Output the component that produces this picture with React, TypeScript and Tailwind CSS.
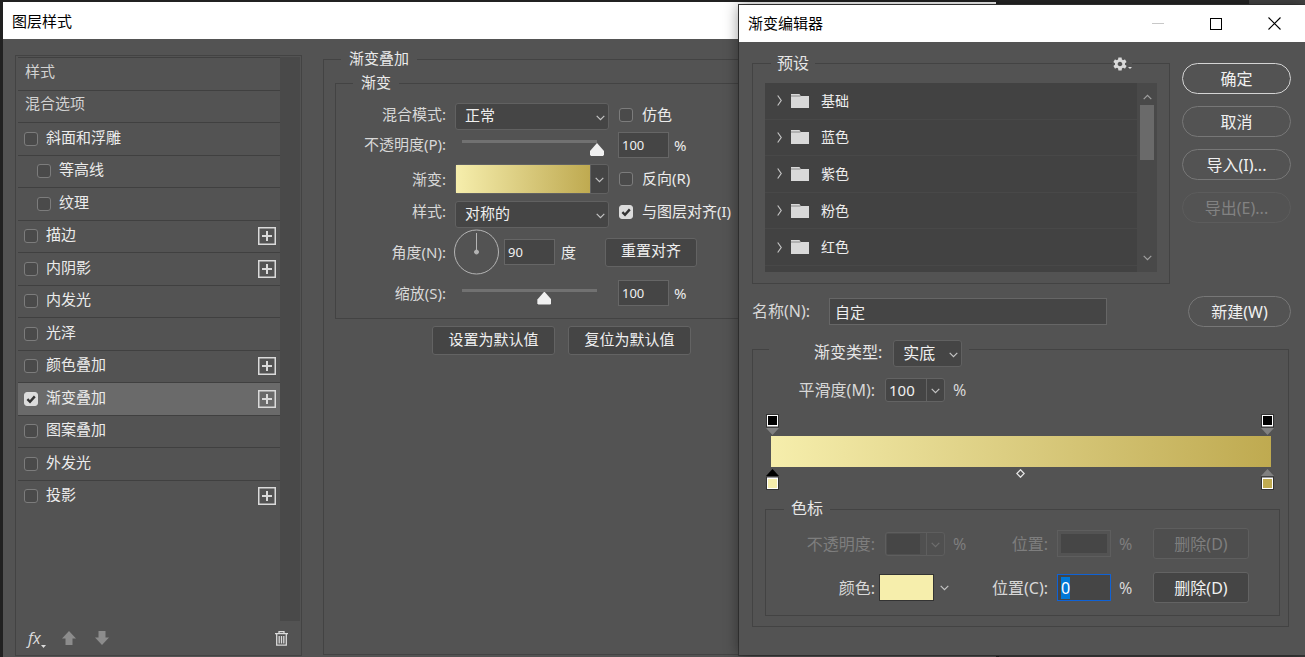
import React from 'react'
import clsx from 'clsx'
import { IoMdSettings } from 'react-icons/io'

interface Effect {
  name: string
  indent?: boolean
  checked?: boolean
  addable?: boolean
}

const effects: Effect[] = [
  { name: '斜面和浮雕' },
  { name: '等高线', indent: true },
  { name: '纹理', indent: true },
  { name: '描边', addable: true },
  { name: '内阴影', addable: true },
  { name: '内发光' },
  { name: '光泽' },
  { name: '颜色叠加', addable: true },
  { name: '渐变叠加', checked: true, addable: true },
  { name: '图案叠加' },
  { name: '外发光' },
  { name: '投影', addable: true },
]

const presets = ['基础', '蓝色', '紫色', '粉色', '红色']

function Chevron({ className }: { className?: string }) {
  return (
    <svg width="9" height="6" viewBox="0 0 9 6" className={className} fill="none" stroke="currentColor">
      <path d="M0.7 0.8 4.5 4.6 8.3 0.8" strokeWidth="1.2" />
    </svg>
  )
}

function Checkbox({ id, checked, label }: { id?: string; checked?: boolean; label?: string }) {
  return (
    <span className="relative flex size-[14px] shrink-0">
      <input
        id={id}
        type="checkbox"
        aria-label={label}
        defaultChecked={checked}
        className="peer size-[14px] appearance-none rounded-[3px] border border-[#7c7c7c] bg-[#4a4a4a] checked:border-[#dcdcdc] checked:bg-[#dcdcdc]"
      />
      <svg
        viewBox="0 0 14 14"
        className="pointer-events-none absolute inset-0 hidden peer-checked:block"
        fill="none"
        stroke="#333"
        strokeWidth="2.4"
      >
        <path d="M3.4 7.2 6 9.8 10.8 4.4" />
      </svg>
    </span>
  )
}

function CheckLabel({ id, checked, text }: { id: string; checked?: boolean; text: string }) {
  return (
    <div className="flex items-center gap-[9px] pl-px whitespace-nowrap">
      <Checkbox id={id} checked={checked} />
      <label htmlFor={id} className="pb-0.5">{text}</label>
    </div>
  )
}

function Select({ id, value, className }: { id: string; value: string; className?: string }) {
  return (
    <div className={clsx('relative', className)}>
      <select
        id={id}
        className="block h-[27px] w-full appearance-none rounded-[3px] border border-[#616161] bg-[#454545] pb-[3px] pl-[9px] text-[#f0f0f0]"
      >
        <option>{value}</option>
      </select>
      <Chevron className="pointer-events-none absolute top-3 right-1 text-[#c4c4c4]" />
    </div>
  )
}

function Slider({ id, value }: { id: string; value: number }) {
  return (
    <input
      id={id}
      type="range"
      defaultValue={value}
      className="mt-[7px] block h-4 w-[149px] appearance-none bg-[linear-gradient(#717171,#717171)] bg-[length:135px_3px] bg-[position:7px_0px] bg-no-repeat [&::-webkit-slider-thumb]:mt-[3px] [&::-webkit-slider-thumb]:h-[13px] [&::-webkit-slider-thumb]:w-[14px] [&::-webkit-slider-thumb]:appearance-none [&::-webkit-slider-thumb]:bg-[#f0f0f0] [&::-webkit-slider-thumb]:[clip-path:polygon(50%_0,100%_62%,100%_90%,93%_100%,7%_100%,0_90%,0_62%)]"
    />
  )
}

function NumberBox({ id, value, label }: { id?: string; value: string; label?: string }) {
  return (
    <input
      id={id}
      aria-label={label}
      defaultValue={value}
      className="h-[26px] w-[51px] border border-[#666] bg-[#454545] pl-[3px] text-[13px] text-[#f0f0f0]"
    />
  )
}

function Combo({ id, value, disabled }: { id: string; value?: string; disabled?: boolean }) {
  return (
    <div
      className={clsx(
        'flex h-6 w-[60px] rounded-[3px] border',
        disabled ? 'border-[#5e5e5e] bg-[#505050] text-[#6e6e6e]' : 'border-[#636363] bg-[#454545] text-[#c4c4c4]'
      )}
    >
      <input
        id={id}
        defaultValue={value}
        disabled={disabled}
        className={clsx('text-[15px]', disabled ? 'm-px w-[33px] bg-[#464646]' : 'w-10 pl-[3px] text-[#f0f0f0]')}
      />
      <button
        aria-label="展开"
        disabled={disabled}
        className="ml-auto flex w-[18px] items-center justify-center border-l border-[#636363] pt-0.5 disabled:border-[#5e5e5e]"
      >
        <Chevron />
      </button>
    </div>
  )
}

function EffectRow({ name, indent, checked, addable }: Effect) {
  const id = `effect-${name}`
  return (
    <li
      className={clsx(
        'flex items-center border-t border-[#404040] pr-1',
        indent ? 'pl-[19px]' : 'pl-[6px]',
        checked && 'bg-[#6a6a6a]'
      )}
    >
      <Checkbox id={id} checked={checked} />
      <label htmlFor={id} className="flex-1 pb-1 pl-2">
        {name}
      </label>
      {addable && (
        <button aria-label={`添加${name}`} className="text-[#dadada]">
          <svg width="18" height="18" viewBox="0 0 18 18" fill="none" stroke="currentColor">
            <rect x="0.75" y="0.75" width="16.5" height="16.5" strokeWidth="1.5" />
            <path d="M9 4v10M4 9h10" strokeWidth="2" />
          </svg>
        </button>
      )}
    </li>
  )
}

function EffectPanel() {
  return (
    <div className="mt-4 mb-px ml-3 flex w-[287px] flex-col border border-[#434343] pt-px">
      <div className="flex flex-1 pr-px pl-0.5">
        <ul className="grid h-[455px] flex-1 auto-rows-fr">
          <li className="flex items-center border-t border-[#404040] pb-1.5 pl-[7px] text-[#d2d2d2]">样式</li>
          <li className="flex items-center border-t border-[#404040] pb-1.5 pl-[7px] text-[#d2d2d2]">混合选项</li>
          {effects.map((effect) => (
            <EffectRow key={effect.name} {...effect} />
          ))}
        </ul>
        <div className="w-5 bg-[#494949]" />
      </div>
      <div className="flex h-[34px] items-center pr-[13px] pl-3">
        <button aria-label="效果菜单" className="flex w-5 items-end text-[#dcdcdc]">
          <span className="font-['Open_Sans'] text-base leading-5 italic">fx</span>
          <svg width="5" height="3" viewBox="0 0 5 3" fill="currentColor" className="shrink-0">
            <path d="M0 0h5L2.5 3z" />
          </svg>
        </button>
        <button aria-label="上移" className="ml-[14px] text-[#8c8c8c]">
          <svg width="14" height="14" viewBox="0 0 14 14" fill="currentColor">
            <path d="M7 0 14 7.5h-3.5V14h-7V7.5H0z" />
          </svg>
        </button>
        <button aria-label="下移" className="ml-[19px] text-[#8c8c8c]">
          <svg width="14" height="14" viewBox="0 0 14 14" fill="currentColor">
            <path d="M3.5 0h7v6.5H14L7 14 0 6.5h3.5z" />
          </svg>
        </button>
        <button aria-label="删除" className="ml-auto text-[#dadada]">
          <svg width="13" height="15" viewBox="0 0 13 15" fill="none" stroke="currentColor">
            <path d="M0 2.6h13M4 2.5V.7h5v1.8M1.7 3v11.2h9.6V3" strokeWidth="1.3" />
            <path d="M4.2 5v7.5M6.5 5v7.5M8.8 5v7.5" strokeWidth="1.3" />
          </svg>
        </button>
      </div>
    </div>
  )
}

const optionRow = 'grid grid-cols-[110px_154px_auto] items-center gap-x-[9px]'
const optionLabel = 'text-right whitespace-nowrap text-[#d8d8d8]'
const flatButton = 'rounded-[3px] border border-[#636363] bg-[#454545] pb-1 text-[#f0f0f0]'

function OverlayPanel() {
  return (
    <fieldset className="mt-[10px] mr-32 mb-0.5 ml-[21px] min-w-0 flex-1 border border-[#434343]">
      <legend className="ml-[17px] h-5 px-2 leading-[18px]">渐变叠加</legend>
      <fieldset className="mt-1 mr-3 ml-[11px] border border-[#434343] pt-[10px] pb-[7px]">
        <legend className="ml-[17px] h-5 px-2 leading-[18px]">渐变</legend>
        <div className={optionRow}>
          <label htmlFor="blend" className={clsx(optionLabel, 'pb-1.5')}>混合模式:</label>
          <Select id="blend" value="正常" />
          <div className="pb-1">
            <CheckLabel id="dither" text="仿色" />
          </div>
        </div>
        <div className={clsx(optionRow, 'h-[29px]')}>
          <label htmlFor="opacity" className={clsx(optionLabel, 'pb-0.5')}>不透明度(P):</label>
          <Slider id="opacity" value={100} />
          <div className="flex items-center gap-[5px]">
            <NumberBox value="100" label="不透明度" />%
          </div>
        </div>
        <div className={clsx(optionRow, 'h-10')}>
          <label htmlFor="fill" className={optionLabel}>渐变:</label>
          <div className="flex h-[30px] rounded-[3px] border border-[#626262] bg-[#454545]">
            <button id="fill" aria-label="渐变" className="flex-1 bg-linear-to-r from-[#f6eeac] to-[#bfaa50]" />
            <button aria-label="渐变列表" className="flex w-[18px] items-center justify-center border-l border-[#626262] pt-0.5 text-[#c4c4c4]">
              <Chevron />
            </button>
          </div>
          <CheckLabel id="reverse" text="反向(R)" />
        </div>
        <div className={clsx(optionRow, 'h-[30px]')}>
          <label htmlFor="style" className={clsx(optionLabel, 'pb-1.5')}>样式:</label>
          <Select id="style" value="对称的" />
          <div className="pb-1">
            <CheckLabel id="align" text="与图层对齐(I)" checked />
          </div>
        </div>
        <div className="flex h-[46px] items-center">
          <label htmlFor="angle" className={clsx(optionLabel, 'w-[110px]')}>角度(N):</label>
          <svg width="46" height="46" viewBox="0 0 46 46" className="ml-2" fill="none" stroke="#b4b4b4">
            <circle cx="22.5" cy="23" r="22" />
            <path d="M22.5 4v19" />
            <circle cx="22.5" cy="23" r="2" fill="#b4b4b4" />
          </svg>
          <div className="ml-1 flex items-center gap-[6px]">
            <NumberBox id="angle" value="90" />度
          </div>
          <button className={clsx(flatButton, 'ml-[29px] h-[29px] w-[92px]')}>重置对齐</button>
        </div>
        <div className={clsx(optionRow, 'h-9')}>
          <label htmlFor="scale" className={optionLabel}>缩放(S):</label>
          <Slider id="scale" value={61} />
          <div className="flex items-center gap-[5px]">
            <NumberBox value="100" label="缩放" />%
          </div>
        </div>
      </fieldset>
      <div className="mt-[7px] ml-[108px] flex gap-[13px]">
        <button className={clsx(flatButton, 'h-[29px] w-[123px]')}>设置为默认值</button>
        <button className={clsx(flatButton, 'h-[29px] w-[123px]')}>复位为默认值</button>
      </div>
    </fieldset>
  )
}

// a colour or opacity handle of the gradient ramp
function Stop({ color, pointer, flip }: { color: string; pointer: string; flip?: boolean }) {
  return (
    <svg width="13" height="21" viewBox="0 0 13 21">
      <g transform={flip ? 'matrix(1 0 0 -1 0 21)' : undefined}>
        <path d="M0 14h13L6.5 21z" fill={pointer} />
        <rect x="0" y="0" width="13" height="13.5" fill="#333" />
        <rect x="1" y="1" width="11" height="11.5" fill="#fff" />
        <rect x="2" y="2" width="9" height="9" fill={color} />
      </g>
    </svg>
  )
}

function PresetList() {
  return (
    <div className="flex h-[189px] bg-[#494949]">
      <ul className="flex flex-1 flex-col bg-[#424242] pb-[6px]">
        {presets.map((preset) => (
          <li key={preset} className="flex flex-1 items-center border-b border-[#484848] pl-3 text-sm text-[#eee]">
            <svg width="5" height="11" viewBox="0 0 5 11" fill="none" stroke="#c4c4c4">
              <path d="M0.7 0.5 4.2 5.5 0.7 10.5" strokeWidth="1.2" />
            </svg>
            <svg width="18" height="14" viewBox="0 0 18 14" className="ml-[9px]" fill="#d9d9d9">
              <path d="M0 0h8.5l1.2 2H18v12H0z" />
              <path d="M0 2h9.5" stroke="#777" strokeWidth="0.8" />
            </svg>
            <span className="pl-3">{preset}</span>
          </li>
        ))}
      </ul>
      <div className="flex w-5 flex-col items-center pt-[11px] pb-[11px] text-[#a0a0a0]">
        <Chevron className="rotate-180" />
        <div className="mt-[5px] h-[55px] w-[14px] bg-[#6a6a6a]" />
        <Chevron className="mt-auto" />
      </div>
    </div>
  )
}

const pill = 'h-[31px] rounded-full border border-[#777] pt-px text-[#f0f0f0] disabled:border-[#5c5c5c] disabled:text-[#828282]'

function GradientEditor() {
  return (
    <section className="absolute top-[5px] right-0 left-[739px] bg-[#535353] pb-7 text-base text-[#d8d8d8] shadow-[0_0_14px_rgba(0,0,0,0.45),0_0_0_1px_#3a3a3a]">
      <header className="flex h-[37px] items-center bg-white pr-6 pl-[9px] text-black">
        <h2 className="flex-1 text-[15px]">渐变编辑器</h2>
        <div className="flex items-center gap-[46px]">
          <button aria-label="最小化" className="h-px w-3 bg-[#c8c8c8]" />
          <button aria-label="最大化" className="size-3 border border-black" />
          <button aria-label="关闭">
            <svg width="13" height="13" viewBox="0 0 13 13" stroke="#000" strokeWidth="1.1">
              <path d="M0.5 0.5l12 12M12.5 0.5l-12 12" />
            </svg>
          </button>
        </div>
      </header>

      <div className="flex gap-3 pt-[9px] pr-[14px] pl-[13px]">
        <fieldset className="relative min-w-0 flex-1 border border-[#434343] px-3 pt-2 pb-[11px]">
          <legend className="ml-1.5 h-6 px-1.5 leading-6 text-[#e6e6e6]">预设</legend>
          <button aria-label="预设菜单" className="absolute -top-[19px] right-[37px] flex items-end bg-[#535353] text-[#dadada]">
            <IoMdSettings className="size-4" />
            <svg width="4" height="2" viewBox="0 0 4 2" fill="currentColor" className="mb-[3px]">
              <path d="M0 0h4L2 2z" />
            </svg>
          </button>
          <PresetList />
        </fieldset>
        <div className="mt-3 flex w-[109px] flex-col gap-3">
          <button className={clsx(pill, 'border-[#d4d4d4]')}>确定</button>
          <button className={pill}>取消</button>
          <button className={pill}>导入(I)...</button>
          <button className={pill} disabled>导出(E)...</button>
        </div>
      </div>

      <div className="mt-3 flex items-center pr-[14px] pl-[13px]">
        <label htmlFor="name" className="w-[77px] pb-0.5">名称(N):</label>
        <input
          id="name"
          defaultValue="自定"
          className="h-[27px] min-w-0 flex-1 border border-[#666] bg-[#454545] pl-[5px] text-[15px] text-[#f0f0f0]"
        />
        <button className={clsx(pill, 'ml-[81px] w-[103px]')}>新建(W)</button>
      </div>

      <fieldset className="mt-1 mr-4 ml-[13px] border border-[#434343] pt-[11px] pb-[10px]">
        <legend className="ml-4 flex h-9 items-start gap-[11px] pt-[9px] pr-[7px] pl-[45px] text-[#e6e6e6]">
          <label htmlFor="type">渐变类型:</label>
          <Select id="type" value="实底" className="w-[69px]" />
        </legend>
        <div className="flex items-center">
          <label htmlFor="smooth" className="w-[122px] text-right">平滑度(M):</label>
          <div className="ml-[10px] flex items-center gap-2">
            <Combo id="smooth" value="100" />%
          </div>
        </div>

        <div className="mt-3 pr-[14px] pl-[13px]">
          <div className="flex justify-between">
            <Stop color="#000" pointer="#808080" />
            <Stop color="#000" pointer="#808080" />
          </div>
          <div className="mt-px mr-[3px] ml-[5px] h-[31px] bg-linear-to-r from-[#f6eeac] to-[#bfaa50]" />
          <div className="mt-0.5 flex items-start justify-between">
            <Stop color="#f6eeac" pointer="#000" flip />
            <svg width="9" height="9" viewBox="0 0 9 9" fill="none" stroke="#e4e4e4" strokeWidth="1.3">
              <path d="M4.5 0.8 8.2 4.5 4.5 8.2 0.8 4.5z" />
            </svg>
            <Stop color="#bfaa50" pointer="#808080" flip />
          </div>
        </div>

        <fieldset className="mt-[7px] mr-2 ml-3 flex flex-col gap-[13px] border border-[#434343] pt-[7px] pb-3">
          <legend className="ml-[18px] h-6 px-[7px] leading-[22px] text-[#e6e6e6]">色标</legend>
          <div className="flex h-[31px] items-center text-[#7e7e7e]">
            <label htmlFor="stop-opacity" className="w-[109px] text-right">不透明度:</label>
            <div className="w-[78px] pl-[10px]">
              <Combo id="stop-opacity" disabled />
            </div>
            <div className="flex w-[95px] justify-between">
              <span>%</span>
              <label htmlFor="opacity-pos">位置:</label>
            </div>
            <div className="ml-[9px] h-[27px] w-[54px] border border-[#5e5e5e] p-[3px]">
              <input id="opacity-pos" disabled className="block h-full w-full bg-[#464646]" />
            </div>
            <span className="w-[42px] pl-2">%</span>
            <button disabled className="h-[31px] w-24 rounded-[3px] border border-[#5e5e5e] bg-[#4e4e4e]">删除(D)</button>
          </div>
          <div className="flex h-[31px] items-center">
            <label htmlFor="stop-color" className="w-[109px] text-right">颜色:</label>
            <div className="flex w-[78px] items-center gap-1.5 pl-1">
              <button id="stop-color" aria-label="颜色" className="h-[27px] w-[55px] border border-[#333] bg-[#f6eeac]" />
              <button aria-label="颜色来源" className="text-[#c4c4c4]">
                <Chevron />
              </button>
            </div>
            <label htmlFor="color-pos" className="w-[95px] text-right">位置(C):</label>
            <input
              id="color-pos"
              defaultValue="0"
              autoFocus
              onFocus={(e) => e.target.select()}
              className="ml-[9px] h-[27px] w-[54px] border border-[#0f62d6] bg-[#454545] pl-[3px] text-base text-[#f0f0f0] outline-none selection:bg-[#0078d7] selection:text-white"
            />
            <span className="w-[42px] pl-2">%</span>
            <button className="h-[31px] w-24 rounded-[3px] border border-[#636363] bg-[#454545] text-[#f0f0f0]">删除(D)</button>
          </div>
        </fieldset>
      </fieldset>
    </section>
  )
}

export default function App() {
  return (
    <div className="relative flex min-h-screen flex-col bg-[linear-gradient(#262626_5px,#3c3c3c_5px)] pt-0.5 font-['Noto_Sans','Noto_Sans_CJK_SC',sans-serif] text-[15px] leading-5 text-[#ebebeb]">
      <div className="absolute top-0 right-0 h-[5px] w-14 bg-[#454545]" />
      <section className="mr-[309px] ml-[3px] flex flex-1 flex-col bg-[#535353] shadow-[0_0_0_3px_#212121]">
        <header className="flex h-[37px] items-center bg-white pl-[9px] text-black">
          <h1>图层样式</h1>
        </header>
        <div className="flex flex-1">
          <EffectPanel />
          <OverlayPanel />
        </div>
      </section>
      <GradientEditor />
    </div>
  )
}
